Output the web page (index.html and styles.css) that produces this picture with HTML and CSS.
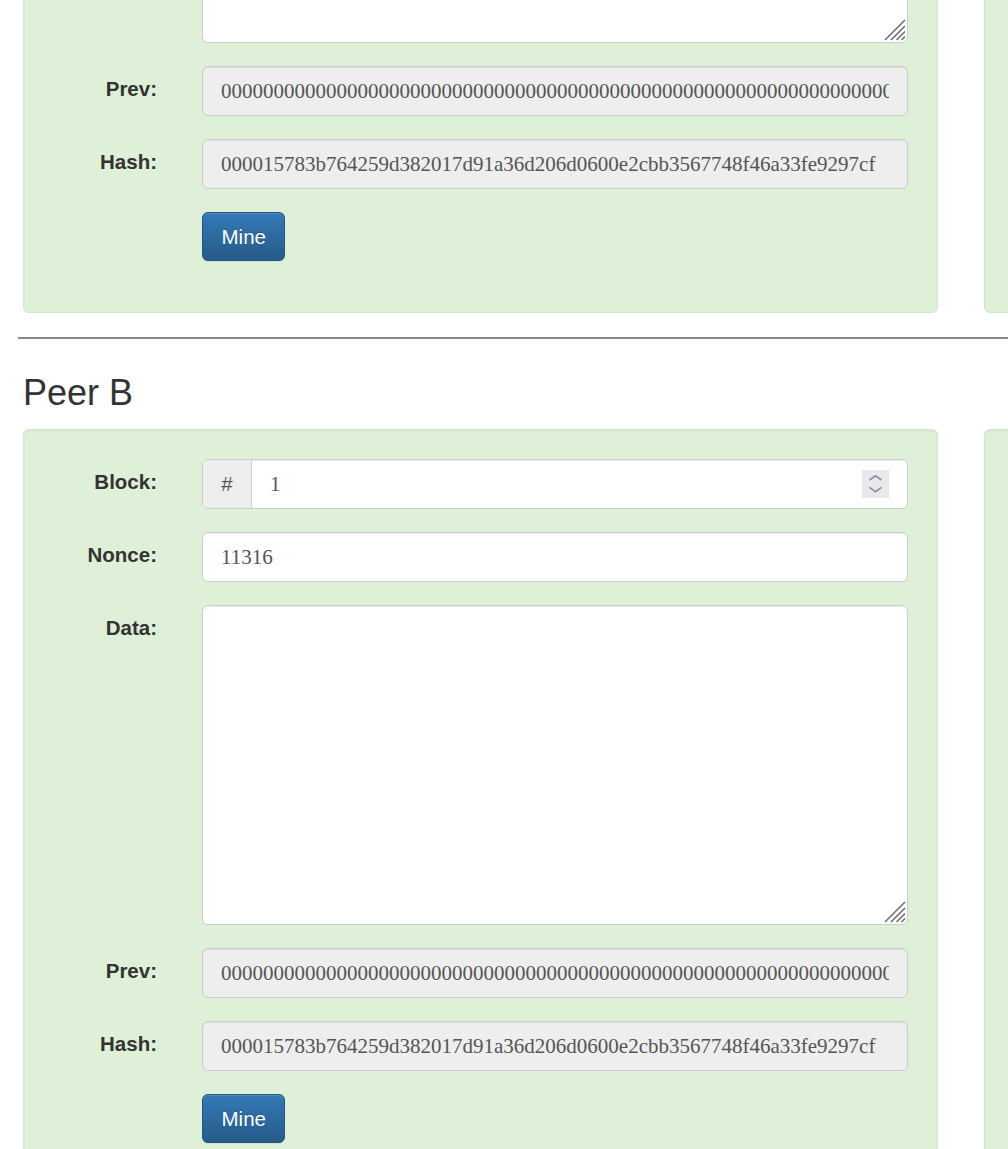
FILE: index.html
```html
<!DOCTYPE html>
<html lang="en">
<head>
<meta charset="utf-8">
<title>Blockchain Demo – Distributed</title>
<link rel="stylesheet" href="styles.css">
</head>
<body>
<main class="page">
  <section class="peer">
    <h1 class="peer-title">Peer A</h1>
    <div class="chain">
      <form class="block">
        <label class="field-label">Block:</label>
        <div class="input-group">
          <span class="addon">#</span>
          <div class="number-box">
            <input class="number-input" type="text" value="1">
            <svg class="spinner" width="27" height="28" viewBox="0 0 27 28"><rect width="27" height="28" fill="#e9e9ed"/><path d="M7.5 10 L13.5 5.7 L19.5 10" fill="none" stroke="#8f8f9d" stroke-width="1.7"/><path d="M7.5 17.4 L13.5 21.7 L19.5 17.4" fill="none" stroke="#8f8f9d" stroke-width="1.7"/></svg>
          </div>
        </div>
        <label class="field-label">Nonce:</label>
        <input class="field" type="text" value="11316">
        <label class="field-label">Data:</label>
        <div class="textarea-box">
          <textarea class="field textarea"></textarea>
          <svg class="grip" width="22" height="22" viewBox="0 0 22 22"><path d="M1 21 L21 1 M7 21 L21 7 M12.5 21 L21 12.5 M17.5 21 L21 17.5" stroke="#707070" stroke-width="1.6" fill="none"/></svg>
        </div>
        <label class="field-label">Prev:</label>
        <input class="field" type="text" readonly value="0000000000000000000000000000000000000000000000000000000000000000">
        <label class="field-label">Hash:</label>
        <input class="field" type="text" readonly value="000015783b764259d382017d91a36d206d0600e2cbb3567748f46a33fe9297cf">
        <button class="mine-btn" type="button">Mine</button>
      </form>
      <form class="block">
        <label class="field-label">Block:</label>
        <div class="input-group">
          <span class="addon">#</span>
          <div class="number-box">
            <input class="number-input" type="text" value="2">
            <svg class="spinner" width="27" height="28" viewBox="0 0 27 28"><rect width="27" height="28" fill="#e9e9ed"/><path d="M7.5 10 L13.5 5.7 L19.5 10" fill="none" stroke="#8f8f9d" stroke-width="1.7"/><path d="M7.5 17.4 L13.5 21.7 L19.5 17.4" fill="none" stroke="#8f8f9d" stroke-width="1.7"/></svg>
          </div>
        </div>
        <label class="field-label">Nonce:</label>
        <input class="field" type="text" value="35230">
        <label class="field-label">Data:</label>
        <div class="textarea-box">
          <textarea class="field textarea"></textarea>
          <svg class="grip" width="22" height="22" viewBox="0 0 22 22"><path d="M1 21 L21 1 M7 21 L21 7 M12.5 21 L21 12.5 M17.5 21 L21 17.5" stroke="#707070" stroke-width="1.6" fill="none"/></svg>
        </div>
        <label class="field-label">Prev:</label>
        <input class="field" type="text" readonly value="000015783b764259d382017d91a36d206d0600e2cbb3567748f46a33fe9297cf">
        <label class="field-label">Hash:</label>
        <input class="field" type="text" readonly value="000012fa9b916eb9078f8d98a7864e697ae83ed54f5146bd84452cdafd043c19">
        <button class="mine-btn" type="button">Mine</button>
      </form>
    </div>
  </section>

  <hr class="divider">

  <section class="peer">
    <h1 class="peer-title">Peer B</h1>
    <div class="chain">
      <form class="block">
        <label class="field-label">Block:</label>
        <div class="input-group">
          <span class="addon">#</span>
          <div class="number-box">
            <input class="number-input" type="text" value="1">
            <svg class="spinner" width="27" height="28" viewBox="0 0 27 28"><rect width="27" height="28" fill="#e9e9ed"/><path d="M7.5 10 L13.5 5.7 L19.5 10" fill="none" stroke="#8f8f9d" stroke-width="1.7"/><path d="M7.5 17.4 L13.5 21.7 L19.5 17.4" fill="none" stroke="#8f8f9d" stroke-width="1.7"/></svg>
          </div>
        </div>
        <label class="field-label">Nonce:</label>
        <input class="field" type="text" value="11316">
        <label class="field-label">Data:</label>
        <div class="textarea-box">
          <textarea class="field textarea"></textarea>
          <svg class="grip" width="22" height="22" viewBox="0 0 22 22"><path d="M1 21 L21 1 M7 21 L21 7 M12.5 21 L21 12.5 M17.5 21 L21 17.5" stroke="#707070" stroke-width="1.6" fill="none"/></svg>
        </div>
        <label class="field-label">Prev:</label>
        <input class="field" type="text" readonly value="0000000000000000000000000000000000000000000000000000000000000000">
        <label class="field-label">Hash:</label>
        <input class="field" type="text" readonly value="000015783b764259d382017d91a36d206d0600e2cbb3567748f46a33fe9297cf">
        <button class="mine-btn" type="button">Mine</button>
      </form>
      <form class="block">
        <label class="field-label">Block:</label>
        <div class="input-group">
          <span class="addon">#</span>
          <div class="number-box">
            <input class="number-input" type="text" value="2">
            <svg class="spinner" width="27" height="28" viewBox="0 0 27 28"><rect width="27" height="28" fill="#e9e9ed"/><path d="M7.5 10 L13.5 5.7 L19.5 10" fill="none" stroke="#8f8f9d" stroke-width="1.7"/><path d="M7.5 17.4 L13.5 21.7 L19.5 17.4" fill="none" stroke="#8f8f9d" stroke-width="1.7"/></svg>
          </div>
        </div>
        <label class="field-label">Nonce:</label>
        <input class="field" type="text" value="35230">
        <label class="field-label">Data:</label>
        <div class="textarea-box">
          <textarea class="field textarea"></textarea>
          <svg class="grip" width="22" height="22" viewBox="0 0 22 22"><path d="M1 21 L21 1 M7 21 L21 7 M12.5 21 L21 12.5 M17.5 21 L21 17.5" stroke="#707070" stroke-width="1.6" fill="none"/></svg>
        </div>
        <label class="field-label">Prev:</label>
        <input class="field" type="text" readonly value="000015783b764259d382017d91a36d206d0600e2cbb3567748f46a33fe9297cf">
        <label class="field-label">Hash:</label>
        <input class="field" type="text" readonly value="000012fa9b916eb9078f8d98a7864e697ae83ed54f5146bd84452cdafd043c19">
        <button class="mine-btn" type="button">Mine</button>
      </form>
    </div>
  </section>
</main>
</body>
</html>
```

FILE: styles.css
```css
* {
  box-sizing: border-box;
}

html,
body {
  margin: 0;
  padding: 0;
  overflow: hidden;
  background: #fff;
}

body {
  font-family: "Liberation Sans", Arial, Helvetica, sans-serif;
  font-size: 20.5px;
  color: #333;
}

/* page is shown scrolled part-way down */
.page {
  display: flex;
  flex-direction: column;
  margin-top: -543px;
}

.peer {
  padding-left: 23px;
}

.peer-title {
  margin: 34px 0 16px 0;
  font-size: 36px;
  line-height: 40px;
  font-weight: 400;
  color: #333;
}

.divider {
  margin: 24px 0 0 18px;
  height: 2px;
  border: 0;
  background: #888;
}

.chain {
  display: flex;
  gap: 46px;
  overflow: hidden;
}

.block {
  flex: 0 0 915px;
  margin: 0;
  display: grid;
  grid-template-columns: 104px 1fr;
  column-gap: 45px;
  row-gap: 23px;
  align-items: start;
  padding: 29px 29px 51px;
  background: #dff0d8;
  border: 1px solid #d4e6cc;
  border-radius: 6px;
  box-shadow: inset 0 1px 2px rgba(0, 0, 0, 0.06);
}

.field-label {
  grid-column: 1;
  text-align: right;
  font-weight: 700;
  line-height: 29px;
  padding-top: 7.5px;
  color: #333;
}

.field,
.number-input {
  font-family: "Liberation Serif", "Times New Roman", serif;
  font-size: 21px;
  color: #555;
}

.field {
  grid-column: 2;
  display: block;
  width: 100%;
  height: 50px;
  margin: 0;
  padding: 0 18px;
  border: 1px solid #ccc;
  border-radius: 6px;
  background: #fff;
  box-shadow: inset 0 1px 1px rgba(0, 0, 0, 0.075);
  outline: none;
}

.field[readonly] {
  background: #eee;
}

.input-group {
  grid-column: 2;
  display: flex;
  height: 50px;
  border: 1px solid #ccc;
  border-radius: 6px;
  overflow: hidden;
  background: #fff;
}

.addon {
  flex: 0 0 49px;
  display: flex;
  align-items: center;
  justify-content: center;
  background: #eee;
  border-right: 1px solid #ccc;
  color: #555;
  font-size: 20.5px;
}

.number-box {
  flex: 1;
  display: flex;
  align-items: center;
  padding: 0 18px;
  box-shadow: inset 0 1px 1px rgba(0, 0, 0, 0.075);
}

.number-input {
  flex: 1;
  min-width: 0;
  height: 100%;
  border: 0;
  padding: 0;
  margin: 0;
  background: transparent;
  outline: none;
}

.spinner {
  display: block;
  flex: 0 0 auto;
}

.textarea-box {
  grid-column: 2;
  position: relative;
  height: 320px;
}

.textarea {
  height: 100%;
  padding: 10px 18px;
  resize: none;
}

.grip {
  position: absolute;
  right: 2px;
  bottom: 2px;
}

.mine-btn {
  grid-column: 2;
  justify-self: start;
  height: 49px;
  margin: 0;
  padding: 0 18.5px;
  font-family: "Liberation Sans", Arial, Helvetica, sans-serif;
  font-size: 20.5px;
  color: #fff;
  background-color: #265a88;
  background-image: linear-gradient(to bottom, #337ab7 0, #265a88 100%);
  border: 1px solid #245580;
  border-radius: 6px;
  text-shadow: 0 -1px 0 rgba(0, 0, 0, 0.2);
  box-shadow: inset 0 1px 0 rgba(255, 255, 255, 0.15), 0 1px 1px rgba(0, 0, 0, 0.075);
  cursor: pointer;
}
```
